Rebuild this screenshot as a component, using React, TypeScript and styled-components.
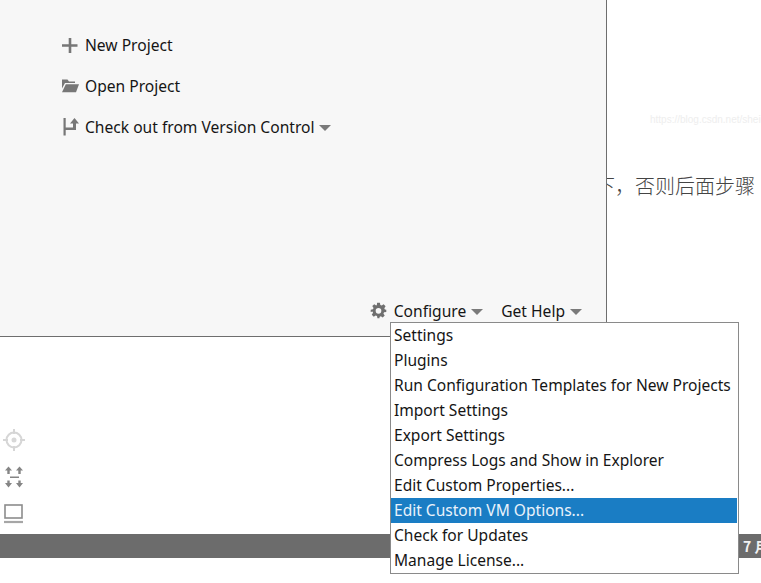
import React from 'react';
import styled, {createGlobalStyle} from 'styled-components';

const GlobalStyle = createGlobalStyle`
  html, body {
    margin: 0;
    padding: 0;
    background: #fff;
  }
  body {
    font-family: 'Noto Sans', 'Noto Sans CJK SC', sans-serif;
    overflow: hidden;
  }
`;

const Page = styled.div`
  position: relative;
  width: 761px;
  height: 583px;
  overflow: hidden;
  background: #fff;
`;

const TopRow = styled.div`
  display: flex;
  height: 337px;
`;

const WelcomePanel = styled.div`
  box-sizing: border-box;
  width: 607px;
  height: 337px;
  display: flex;
  flex-direction: column;
  justify-content: space-between;
  background: #f7f7f7;
  border-right: 1px solid #6e6e6e;
  border-bottom: 1px solid #6e6e6e;
`;

const ActionList = styled.div`
  display: flex;
  flex-direction: column;
  gap: 20px;
  padding: 34px 0 0 61px;
`;

const Action = styled.div`
  display: flex;
  align-items: center;
  gap: 6px;
  height: 21px;
  font-size: 15.6px;
  color: #151515;
`;

const Arrow = styled.span`
  width: 0;
  height: 0;
  margin-left: 5px;
  margin-top: 2px;
  border-left: 6px solid transparent;
  border-right: 6px solid transparent;
  border-top: 6px solid #7a7a7a;
`;

const ActionArrow = styled(Arrow)`
  margin-left: -2px;
`;

const Footer = styled.div`
  display: flex;
  justify-content: flex-end;
  align-items: center;
  gap: 18px;
  height: 21px;
  padding: 0 24px 15px 0;
  font-size: 15.6px;
  color: #151515;
`;

const FooterLink = styled.div`
  display: flex;
  align-items: center;
`;

const GearWrap = styled.span`
  display: flex;
  margin-right: 7px;
`;

const Aside = styled.div`
  flex: 1;
  min-width: 0;
  display: flex;
  flex-direction: column;
  overflow: hidden;
`;

const Watermark = styled.div`
  padding: 114px 0 0 43px;
  height: 16px;
  font-family: 'Liberation Sans', sans-serif;
  font-size: 10px;
  white-space: nowrap;
  color: #eeeeee;
`;

const ArticleLine = styled.div`
  margin-top: 43px;
  margin-left: -12px;
  height: 26px;
  line-height: 26px;
  font-family: 'Noto Sans CJK SC', sans-serif;
  font-size: 20px;
  font-weight: 300;
  white-space: nowrap;
  color: #444;
`;

const Lower = styled.div`
  display: flex;
  flex-direction: column;
  padding-top: 92px;
`;

const ToolColumn = styled.div`
  display: flex;
  flex-direction: column;
  gap: 14px;
  padding-left: 3px;
  height: 105px;
`;

const StatusBar = styled.div`
  display: flex;
  justify-content: flex-end;
  align-items: center;
  height: 24px;
  background: #6c6c6c;
  overflow: hidden;
`;

const StatusText = styled.span`
  width: 18px;
  font-family: 'Noto Sans CJK SC', sans-serif;
  font-size: 14px;
  font-weight: 700;
  white-space: nowrap;
  color: #f2f2f2;
`;

const Menu = styled.div`
  position: absolute;
  left: 390px;
  top: 322px;
  box-sizing: border-box;
  width: 349px;
  padding: 0 1px 0 0;
  background: #fff;
  border: 1px solid #8a8a8a;
`;

const MenuItem = styled.div<{$active?: boolean}>`
  height: 25px;
  line-height: 25px;
  padding-left: 3px;
  font-size: 15.55px;
  white-space: nowrap;
  color: ${p => (p.$active ? '#eaf3fb' : '#151515')};
  background: ${p => (p.$active ? '#1a7dc4' : 'transparent')};
`;

const menuItems = [
  'Settings',
  'Plugins',
  'Run Configuration Templates for New Projects',
  'Import Settings',
  'Export Settings',
  'Compress Logs and Show in Explorer',
  'Edit Custom Properties...',
  'Edit Custom VM Options...',
  'Check for Updates',
  'Manage License...',
];

const PlusIcon = () => (
  <svg width='18' height='18' viewBox='0 0 18 18'>
    <path d='M7.700 2h2.600v6.200H16.500v2.600h-6.200V17H7.700v-6.200H1V8.200h6.700z' fill='#777' />
  </svg>
);

const FolderIcon = () => (
  <svg width='18' height='18' viewBox='0 0 18 18'>
    <path
      d='M1 2.500h5.500l1.500 2h6v1.600H4L1 11.500zM4.800 7.200H18l-3 8H1z'
      fill='#777'
    />
  </svg>
);

const VcsIcon = () => (
  <svg width='18' height='18' viewBox='0 0 18 18'>
    <path
      d='M2.500 0h2.200v17.500H2.500zM4.700 9.500H12V5.500H9L13.500 0 18 5.500h-3V12H4.700z'
      fill='#777'
    />
  </svg>
);

const GearIcon = () => (
  <svg width='17' height='17' viewBox='0 0 24 24'>
    <path
      fillRule='evenodd'
      d='M10 1h4l.6 3.200 1.900.8 2.700-1.800 2.800 2.800-1.800 2.700.8 1.900L23 11v3l-3.200.6-.8 1.900 1.800 2.700-2.800 2.800-2.700-1.800-1.900.8L13.500 23h-3l-.6-3.200-1.900-.8-2.700 1.800-2.800-2.800 1.800-2.700-.8-1.900L1 14v-3l3.200-.6.8-1.900L3.200 5.800 6 3l2.700 1.800 1-.5zM12 8.500a4 4 0 1 0 0 8 4 4 0 0 0 0-8z'
      fill='#6f6f6f'
    />
  </svg>
);

const TargetIcon = () => (
  <svg width='22' height='22' viewBox='0 0 22 22' fill='none' stroke='#d6d6d6'>
    <circle cx='11' cy='11' r='7.500' strokeWidth='2' />
    <circle cx='11' cy='11' r='2.500' fill='#d8d8d8' stroke='none' />
    <path d='M11 0v5M11 17v5M0 11h5M17 11h5' strokeWidth='2' />
  </svg>
);

const FitIcon = () => (
  <svg width='20' height='25' viewBox='-1 0 20 25'>
    <path
      d='M4.500 1.500l3.500 4H5.700V9H3.300V5.500H1zM15.500 1.500l3.500 4h-2.300V9h-2.400V5.500H12zM6 11.500h9v1.600H6zM3.300 15.500h2.400V18H8l-3.500 4.500L1 18h2.300zM14.300 15.500h2.400V18H19l-3.500 4.500L12 18h2.300z'
      fill='#858585'
    />
  </svg>
);

const ScreenIcon = () => (
  <svg width='21' height='20' viewBox='-1 0 21 20' fill='none'>
    <rect x='1' y='1' width='17' height='13' stroke='#8c8c8c' strokeWidth='1.600' />
    <path d='M0 18h19' stroke='#a6a6a6' strokeWidth='2.200' />
  </svg>
);

export default function App() {
  return (
    <Page>
      <GlobalStyle />
      <TopRow>
        <WelcomePanel>
          <ActionList>
            <Action>
              <PlusIcon />
              New Project
            </Action>
            <Action>
              <FolderIcon />
              Open Project
            </Action>
            <Action>
              <VcsIcon />
              Check out from Version Control
              <ActionArrow />
            </Action>
          </ActionList>
          <Footer>
            <FooterLink>
              <GearWrap>
                <GearIcon />
              </GearWrap>
              Configure
              <Arrow />
            </FooterLink>
            <FooterLink>
              Get Help
              <Arrow />
            </FooterLink>
          </Footer>
        </WelcomePanel>
        <Aside>
          <Watermark>https://blog.csdn.net/sheigi</Watermark>
          <ArticleLine>下，否则后面步骤</ArticleLine>
        </Aside>
      </TopRow>
      <Lower>
        <ToolColumn>
          <TargetIcon />
          <FitIcon />
          <ScreenIcon />
        </ToolColumn>
        <StatusBar>
          <StatusText>7 月</StatusText>
        </StatusBar>
      </Lower>
      <Menu>
        {menuItems.map((label, i) => (
          <MenuItem key={label} $active={i === 7}>
            {label}
          </MenuItem>
        ))}
      </Menu>
    </Page>
  );
}
